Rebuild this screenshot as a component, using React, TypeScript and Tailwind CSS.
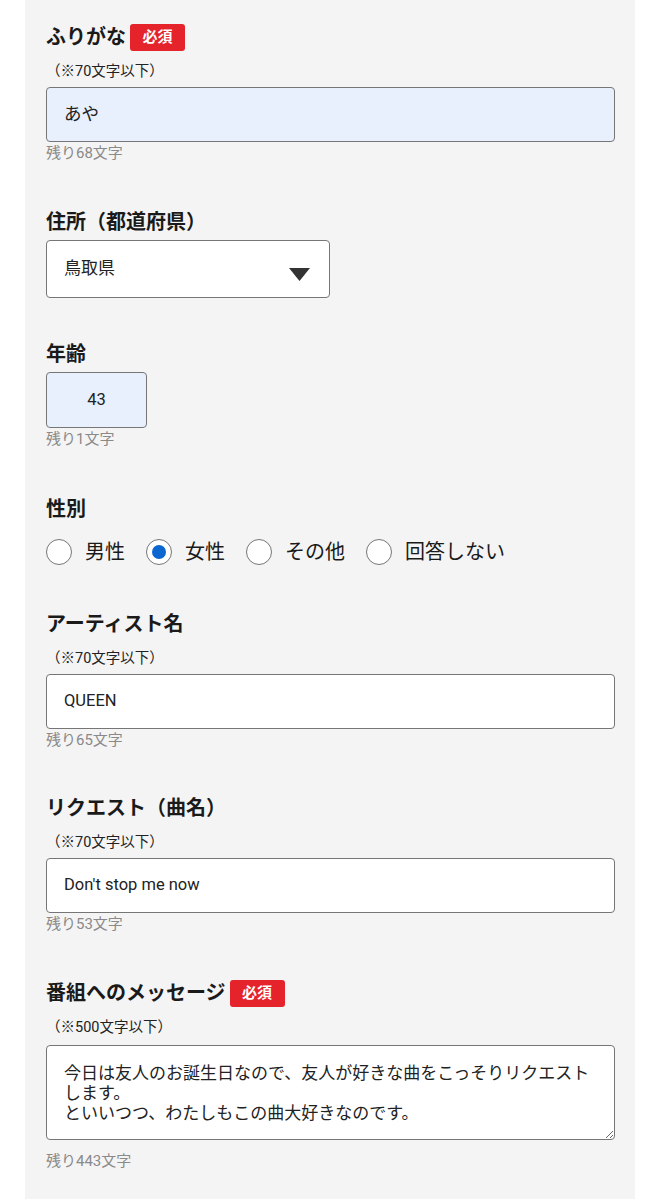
import React from "react";

const font = "font-['Roboto','Noto_Sans_CJK_JP',sans-serif]";

function Badge() {
  return (
    <span className="ml-[4px] inline-flex h-[27px] w-[55px] items-center justify-center rounded-[3px] bg-[#e4232a] text-[15px] font-bold leading-none text-white">
      必須
    </span>
  );
}

function Heading({ children, required }: { children: React.ReactNode; required?: boolean }) {
  return (
    <div className="flex h-[28px] items-center">
      <span className="text-[20px] font-bold leading-[28px] text-[#1a1a1a]">{children}</span>
      {required && <Badge />}
    </div>
  );
}

function Note({ children }: { children: React.ReactNode }) {
  return <div className="mt-[11px] text-[14.5px] leading-[20px] text-[#222]">{children}</div>;
}

function Remain({ children }: { children: React.ReactNode }) {
  return <div className="mt-[1px] text-[15px] leading-[20px] text-[#8a8a8a]">{children}</div>;
}

function Radio({ label, checked }: { label: string; checked?: boolean }) {
  return (
    <label className="flex items-center">
      <span className="flex h-[26px] w-[26px] items-center justify-center rounded-full border border-[#767676] bg-white">
        {checked && <span className="h-[14px] w-[14px] rounded-full bg-[#0b66d0]" />}
      </span>
      <span className="ml-[13px] text-[20px] leading-[28px] text-[#1a1a1a]">{label}</span>
    </label>
  );
}

export default function App() {
  return (
    <div className={`${font} min-h-[1199px] bg-white`}>
      <div className="ml-[25px] min-h-[1199px] w-[610px] bg-[#f4f4f4] pl-[21px] pr-[20px] pt-[23px]">
        {/* ふりがな */}
        <Heading required>ふりがな</Heading>
        <Note>（※70文字以下）</Note>
        <div className="mt-[5px] flex h-[55px] items-center rounded-[4px] border border-[#767676] bg-[#e8f0fe] px-[17px] text-[17.5px] text-[#222]">
          あや
        </div>
        <Remain>残り68文字</Remain>

        {/* 住所 */}
        <div className="mt-[45px]">
          <Heading>住所（都道府県）</Heading>
          <div className="mt-[4px] flex h-[58px] w-[284px] items-center justify-between rounded-[4px] border border-[#767676] bg-white pl-[17px] pr-[19px]">
            <span className="text-[17px] text-[#222]">鳥取県</span>
            <svg width="21" height="13" viewBox="0 0 21 13" className="mt-[10px]">
              <polygon points="0,0 21,0 10.5,13" fill="#333" />
            </svg>
          </div>
        </div>

        {/* 年齢 */}
        <div className="mt-[42px]">
          <Heading>年齢</Heading>
          <div className="mt-[4px] flex h-[56px] w-[101px] items-center justify-center rounded-[4px] border border-[#767676] bg-[#e8f0fe] text-[16.5px] text-[#222]">
            43
          </div>
          <Remain>残り1文字</Remain>
        </div>

        {/* 性別 */}
        <div className="mt-[46px]">
          <Heading>性別</Heading>
          <div className="mt-[13px] flex h-[32px] items-center gap-[21px]">
            <Radio label="男性" />
            <Radio label="女性" checked />
            <Radio label="その他" />
            <Radio label="回答しない" />
          </div>
        </div>

        {/* アーティスト名 */}
        <div className="mt-[42px]">
          <Heading>アーティスト名</Heading>
          <Note>（※70文字以下）</Note>
          <div className="mt-[5px] flex h-[55px] items-center rounded-[4px] border border-[#767676] bg-white px-[17px] text-[16.5px] text-[#222]">
            QUEEN
          </div>
          <Remain>残り65文字</Remain>
        </div>

        {/* リクエスト */}
        <div className="mt-[44px]">
          <Heading>リクエスト（曲名）</Heading>
          <Note>（※70文字以下）</Note>
          <div className="mt-[5px] flex h-[55px] items-center rounded-[4px] border border-[#767676] bg-white px-[17px] text-[16.5px] text-[#222]">
            Don't stop me now
          </div>
          <Remain>残り53文字</Remain>
        </div>

        {/* メッセージ */}
        <div className="mt-[45px]">
          <Heading required>番組へのメッセージ</Heading>
          <Note>（※500文字以下）</Note>
          <textarea
            readOnly
            wrap="off"
            className="mt-[7px] block h-[95px] w-full overflow-hidden rounded-[4px] border border-[#767676] bg-white px-[17px] pt-[17px] text-[17px] leading-[20px] text-[#222] outline-none"
            value={"今日は友人のお誕生日なので、友人が好きな曲をこっそりリクエスト\nします。\nといいつつ、わたしもこの曲大好きなのです。"}
          />
          <div className="mt-[11px] text-[15px] leading-[20px] text-[#8a8a8a]">残り443文字</div>
        </div>
      </div>
    </div>
  );
}
